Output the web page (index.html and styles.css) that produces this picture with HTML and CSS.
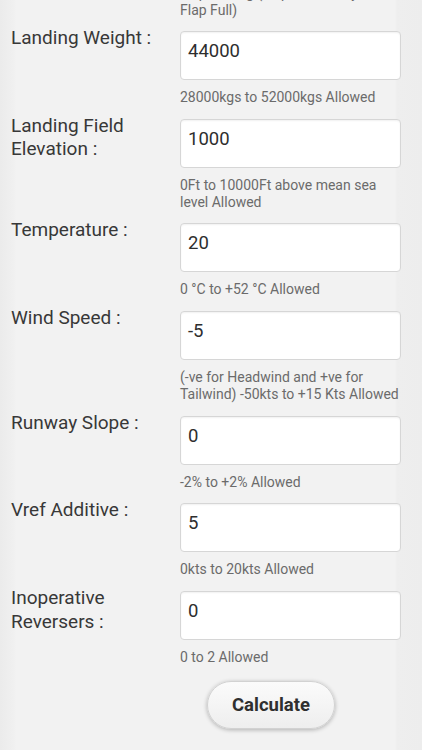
FILE: index.html
```html
<!DOCTYPE html>
<html>
<head>
<meta charset="utf-8">
<link rel="stylesheet" href="styles.css">
</head>
<body>
<div class="page">
  <div class="top-hint">Flap Setting (Flap 3 and Only<br>Flap Full)</div>

  <div class="row">
    <label class="label">Landing Weight :</label>
    <div class="field">
      <div class="input">44000</div>
      <div class="hint">28000kgs to 52000kgs Allowed</div>
    </div>
  </div>

  <div class="row">
    <label class="label">Landing Field Elevation :</label>
    <div class="field">
      <div class="input">1000</div>
      <div class="hint">0Ft to 10000Ft above mean sea level Allowed</div>
    </div>
  </div>

  <div class="row">
    <label class="label">Temperature :</label>
    <div class="field">
      <div class="input">20</div>
      <div class="hint">0 °C to +52 °C Allowed</div>
    </div>
  </div>

  <div class="row">
    <label class="label">Wind Speed :</label>
    <div class="field">
      <div class="input">-5</div>
      <div class="hint">(-ve for Headwind and +ve for Tailwind) -50kts to +15 Kts Allowed</div>
    </div>
  </div>

  <div class="row">
    <label class="label">Runway Slope :</label>
    <div class="field">
      <div class="input">0</div>
      <div class="hint">-2% to +2% Allowed</div>
    </div>
  </div>

  <div class="row">
    <label class="label">Vref Additive :</label>
    <div class="field">
      <div class="input">5</div>
      <div class="hint">0kts to 20kts Allowed</div>
    </div>
  </div>

  <div class="row">
    <label class="label">Inoperative Reversers :</label>
    <div class="field">
      <div class="input">0</div>
      <div class="hint">0 to 2 Allowed</div>
    </div>
  </div>

  <div class="actions">
    <button class="btn">Calculate</button>
  </div>
</div>
</body>
</html>
```

FILE: styles.css
```css
html, body {
  margin: 0;
  padding: 0;
}
body {
  width: 422px;
  height: 750px;
  overflow: hidden;
  font-family: Roboto, "Noto Sans", sans-serif;
  background: linear-gradient(to right, #ebebeb 0px, #f0f0f0 14px, #f2f2f2 16px, #f2f2f2 395px, #eeeeee 397px, #ededed 422px);
}
.page {
  display: flex;
  flex-direction: column;
}
.top-hint {
  margin-top: -15px;
  margin-left: 180px;
  font-size: 14px;
  line-height: 17px;
  color: #6b6b6b;
  height: 34px;
  margin-bottom: 7px;
}
.row {
  display: flex;
  margin-bottom: 7.7px;
}
.label {
  box-sizing: border-box;
  width: 180px;
  padding-left: 11px;
  padding-right: 11px;
  font-size: 19px;
  line-height: 23.5px;
  color: #383838;
  flex: none;
}
.field {
  margin-top: 5px;
  width: 221px;
  flex: none;
}
.input {
  box-sizing: border-box;
  height: 49px;
  background: #ffffff;
  border: 1px solid #d6d6d6;
  border-radius: 4px;
  box-shadow: inset 0 1px 2px rgba(0,0,0,0.06);
  padding: 7px 8px 0 7px;
  font-size: 18.5px;
  line-height: 24px;
  color: #2e2e2e;
}
.hint {
  margin-top: 9px;
  font-size: 14px;
  line-height: 17px;
  color: #6b6b6b;
}
.actions {
  display: flex;
  padding-left: 207px;
  margin-top: 7px;
}
.btn {
  width: 128px;
  height: 48px;
  border-radius: 24px;
  border: 1px solid #d2d2d2;
  background: linear-gradient(to bottom, #fbfbfb, #eeeeee);
  box-shadow: 0 1px 4px rgba(0,0,0,0.28);
  font-family: Roboto, "Noto Sans", sans-serif;
  font-weight: bold;
  font-size: 18.5px;
  color: #2f2f2f;
  padding: 0;
}
```
